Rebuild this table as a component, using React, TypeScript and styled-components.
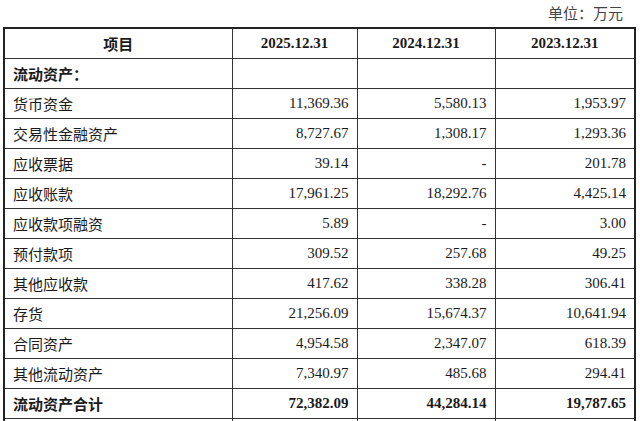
import React from "react";
import styled, { createGlobalStyle } from "styled-components";

interface Row {
  name: string;
  values: string[];
  bold?: boolean;
}

const rows: Row[] = [
  { name: "流动资产：", values: ["", "", ""], bold: true },
  { name: "货币资金", values: ["11,369.36", "5,580.13", "1,953.97"] },
  { name: "交易性金融资产", values: ["8,727.67", "1,308.17", "1,293.36"] },
  { name: "应收票据", values: ["39.14", "-", "201.78"] },
  { name: "应收账款", values: ["17,961.25", "18,292.76", "4,425.14"] },
  { name: "应收款项融资", values: ["5.89", "-", "3.00"] },
  { name: "预付款项", values: ["309.52", "257.68", "49.25"] },
  { name: "其他应收款", values: ["417.62", "338.28", "306.41"] },
  { name: "存货", values: ["21,256.09", "15,674.37", "10,641.94"] },
  { name: "合同资产", values: ["4,954.58", "2,347.07", "618.39"] },
  { name: "其他流动资产", values: ["7,340.97", "485.68", "294.41"] },
  { name: "流动资产合计", values: ["72,382.09", "44,284.14", "19,787.65"], bold: true },
  // next row is cut off by the frame; only its lines show
  { name: "", values: ["", "", ""] },
];

const years = ["2025.12.31", "2024.12.31", "2023.12.31"];
const colWidths = [228, 125, 138, 140];

const GlobalStyle = createGlobalStyle`
  html, body {
    margin: 0;
    padding: 0;
    background: #fff;
    overflow: hidden;
  }
`;

const Page = styled.div`
  width: 640px;
  font-family: "Liberation Serif", "Noto Sans CJK SC", serif;
  color: #1a1a1a;
`;

const Unit = styled.div`
  height: 27px;
  box-sizing: border-box;
  padding: 5px 17px 0 0;
  text-align: right;
  font-size: 15px;
  line-height: 18px;
  color: #444;
`;

const Table = styled.table`
  margin-left: 3px;
  width: 631px;
  border-collapse: collapse;
  table-layout: fixed;
  border: 2px solid #222;
  font-size: 15px;
`;

const Col = styled.col<{ $w: number }>`
  width: ${(p) => p.$w}px;
`;

const Th = styled.th`
  height: 29px;
  padding: 0;
  border: 1px solid #333;
  font-weight: bold;
  text-align: center;
  vertical-align: middle;
`;

const Td = styled.td<{ $bold?: boolean; $num?: boolean }>`
  height: 29px;
  padding: 0 8px;
  border: 1px solid #333;
  font-weight: ${(p) => (p.$bold ? "bold" : "normal")};
  text-align: ${(p) => (p.$num ? "right" : "left")};
  vertical-align: middle;
  white-space: nowrap;
`;

function App() {
  return (
    <Page>
      <GlobalStyle />
      <Unit>单位：万元</Unit>
      <Table>
        <colgroup>
          {colWidths.map((w, i) => (
            <Col key={i} $w={w} />
          ))}
        </colgroup>
        <thead>
          <tr>
            <Th>项目</Th>
            {years.map((y) => (
              <Th key={y}>{y}</Th>
            ))}
          </tr>
        </thead>
        <tbody>
          {rows.map((r, ri) => (
            <tr key={ri}>
              <Td $bold={r.bold}>{r.name}</Td>
              {r.values.map((v, i) => (
                <Td key={i} $num $bold={r.bold}>
                  {v}
                </Td>
              ))}
            </tr>
          ))}
        </tbody>
      </Table>
    </Page>
  );
}

export default App;
